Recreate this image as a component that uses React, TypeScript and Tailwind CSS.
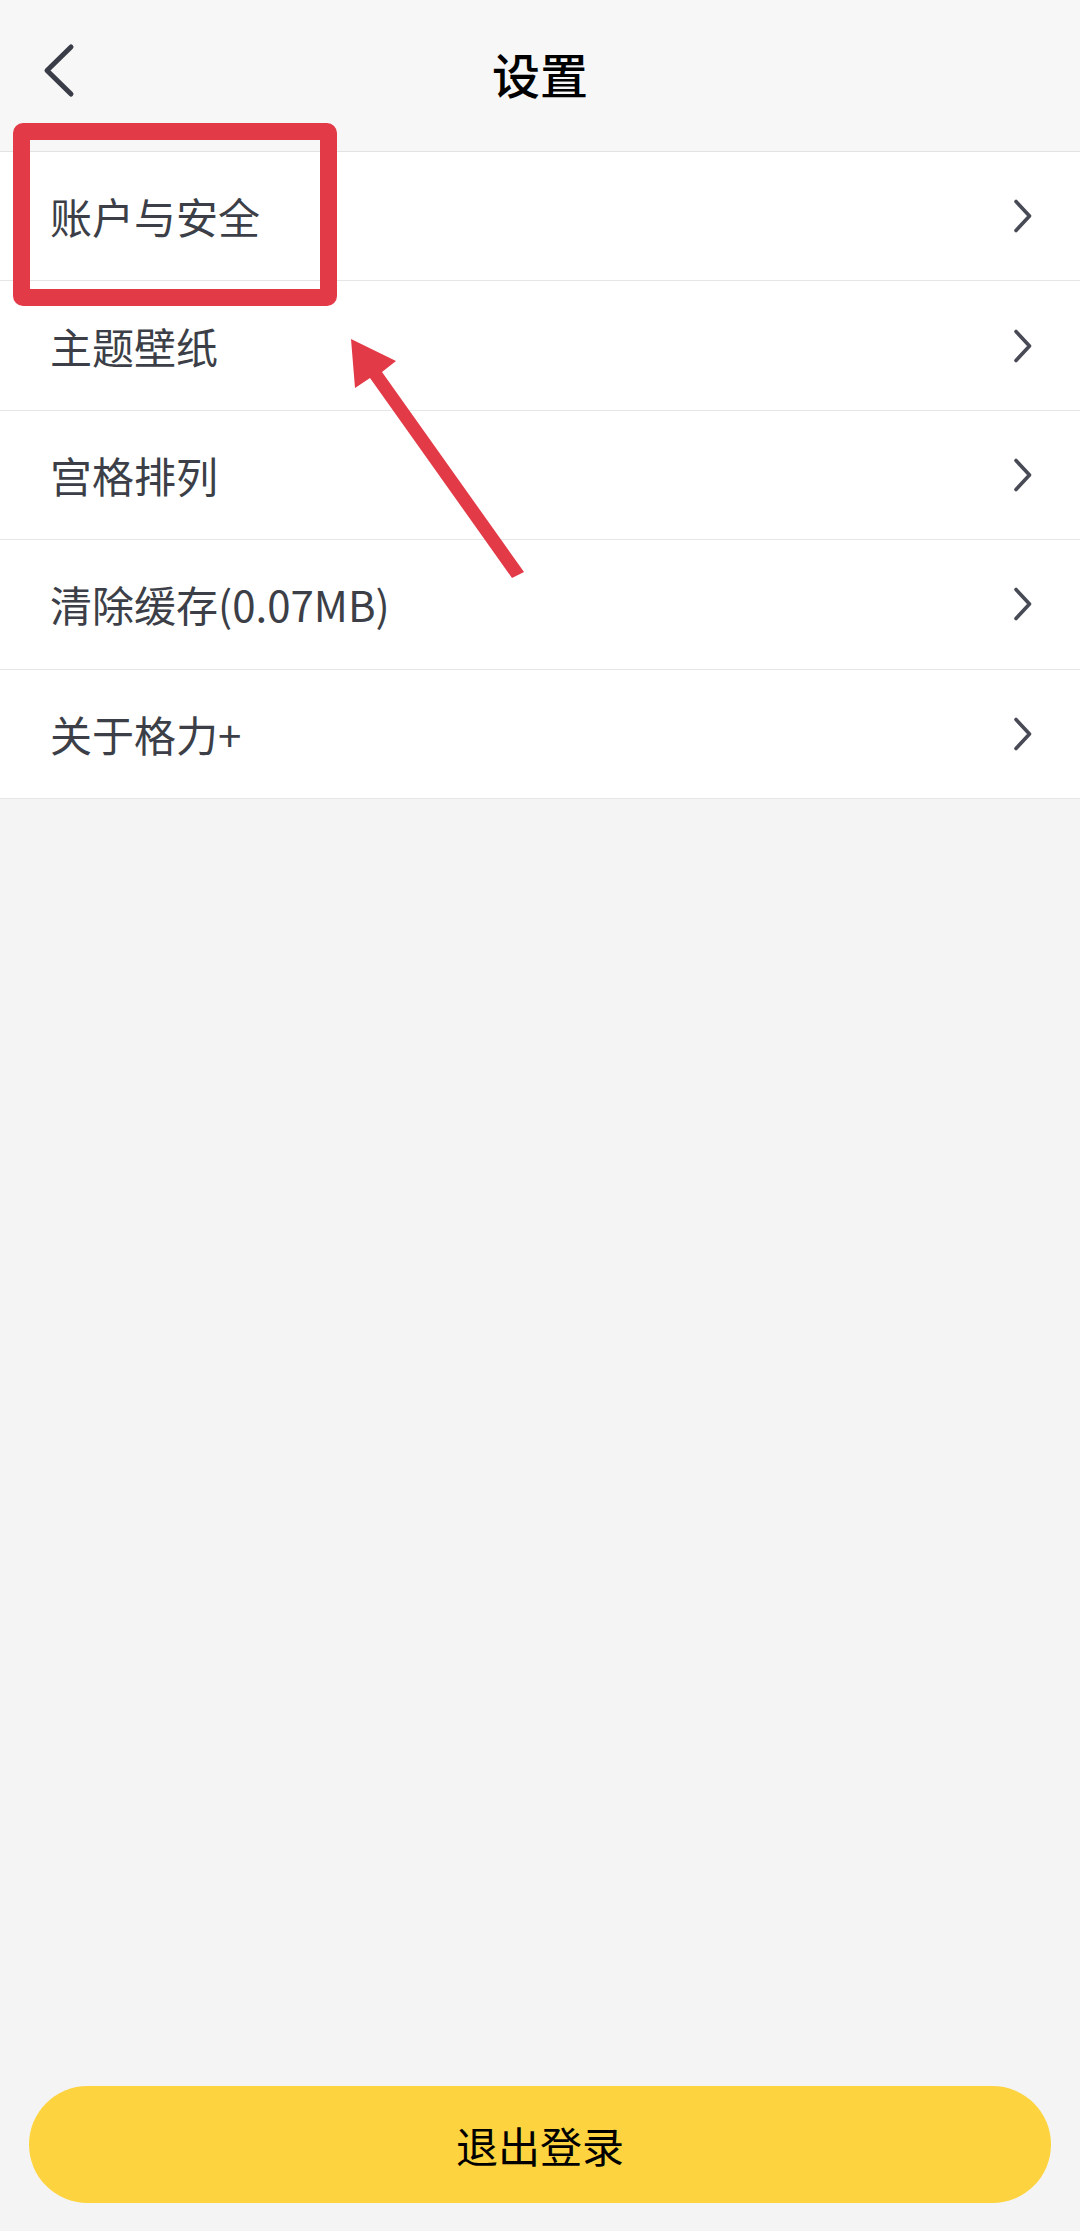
import React from "react";

const items = ["账户与安全", "主题壁纸", "宫格排列", "清除缓存(0.07MB)", "关于格力+"];

function Chevron() {
  return (
    <svg width="22" height="34" viewBox="0 0 22 34" className="shrink-0">
      <path d="M4 2.5 L17.5 17 L4 31.5" fill="none" stroke="#484b55" strokeWidth="3.6" strokeLinecap="round" strokeLinejoin="round" />
    </svg>
  );
}

export default function App() {
  return (
    <div
      className="relative flex min-h-[2231px] w-[1080px] flex-col bg-[#f4f4f4]"
      style={{ fontFamily: '"Noto Sans CJK SC", "Noto Sans", sans-serif' }}
    >
      <header className="relative flex h-[152px] items-center justify-center border-b border-[#e3e3e3] bg-[#f7f7f7]">
        <svg width="40" height="60" viewBox="0 0 40 60" className="absolute left-[38px] top-[42px]">
          <path d="M33 5 L9 28.5 L33 52" fill="none" stroke="#3a3d48" strokeWidth="5" strokeLinecap="round" strokeLinejoin="round" />
        </svg>
        <h1 className="mt-[-5px] text-[48px] font-medium leading-none text-black">设置</h1>
      </header>
      <div className="flex flex-col bg-white">
        {items.map((t) => (
          <div key={t} className="flex h-[129.4px] items-center justify-between border-b-[1.5px] border-[#e6e6e6] pl-[50px] pr-[46px]">
            <span className="text-[42px] leading-none text-[#3c3f47]">{t}</span>
            <Chevron />
          </div>
        ))}
      </div>
      <div className="flex-1" />
      <button className="mx-[29px] mb-[28px] flex h-[117px] items-center justify-center rounded-full bg-[#fdd43f] text-[42px] leading-none text-black">
        退出登录
      </button>

      <div className="pointer-events-none absolute left-[13px] top-[123px] h-[183px] w-[324px] rounded-[10px] border-[17px] border-[#e33a48]" />
      <svg className="pointer-events-none absolute left-0 top-0" width="1080" height="700" viewBox="0 0 1080 700">
        <polygon points="351,339 396,361 382,372 524,572 512,578 370,378 355,388" fill="#e33a48" />
      </svg>
    </div>
  );
}
